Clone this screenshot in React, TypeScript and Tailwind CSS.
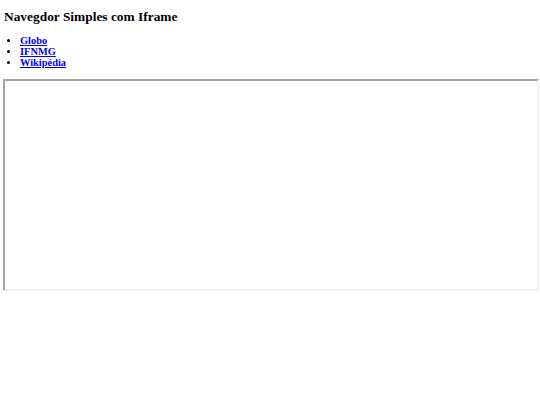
export default function App() {
  return (
    <div className="min-h-[405px] bg-white px-[3px] font-['Liberation_Serif','Times_New_Roman',serif] text-black">
      <h3 className="mt-[9px] pl-[1px] text-[13.4px] leading-[15px] font-bold">Navegdor Simples com Iframe</h3>
      <ul className="mt-[10.5px] list-disc pl-[17px] text-[10.4px] leading-[11.3px] font-bold">
        <li>
          <a href="#" className="text-[#0000ee] underline">Globo</a>
        </li>
        <li>
          <a href="#" className="text-[#0000ee] underline">IFNMG</a>
        </li>
        <li>
          <a href="#" className="text-[#0000ee] underline">Wikipédia</a>
        </li>
      </ul>
      <div className="mt-[10.5px] h-[212px] w-[536px] border-2 border-t-[#a3a3a3] border-l-[#a3a3a3] border-r-[#f0f0f0] border-b-[#f0f0f0]" />
    </div>
  );
}
